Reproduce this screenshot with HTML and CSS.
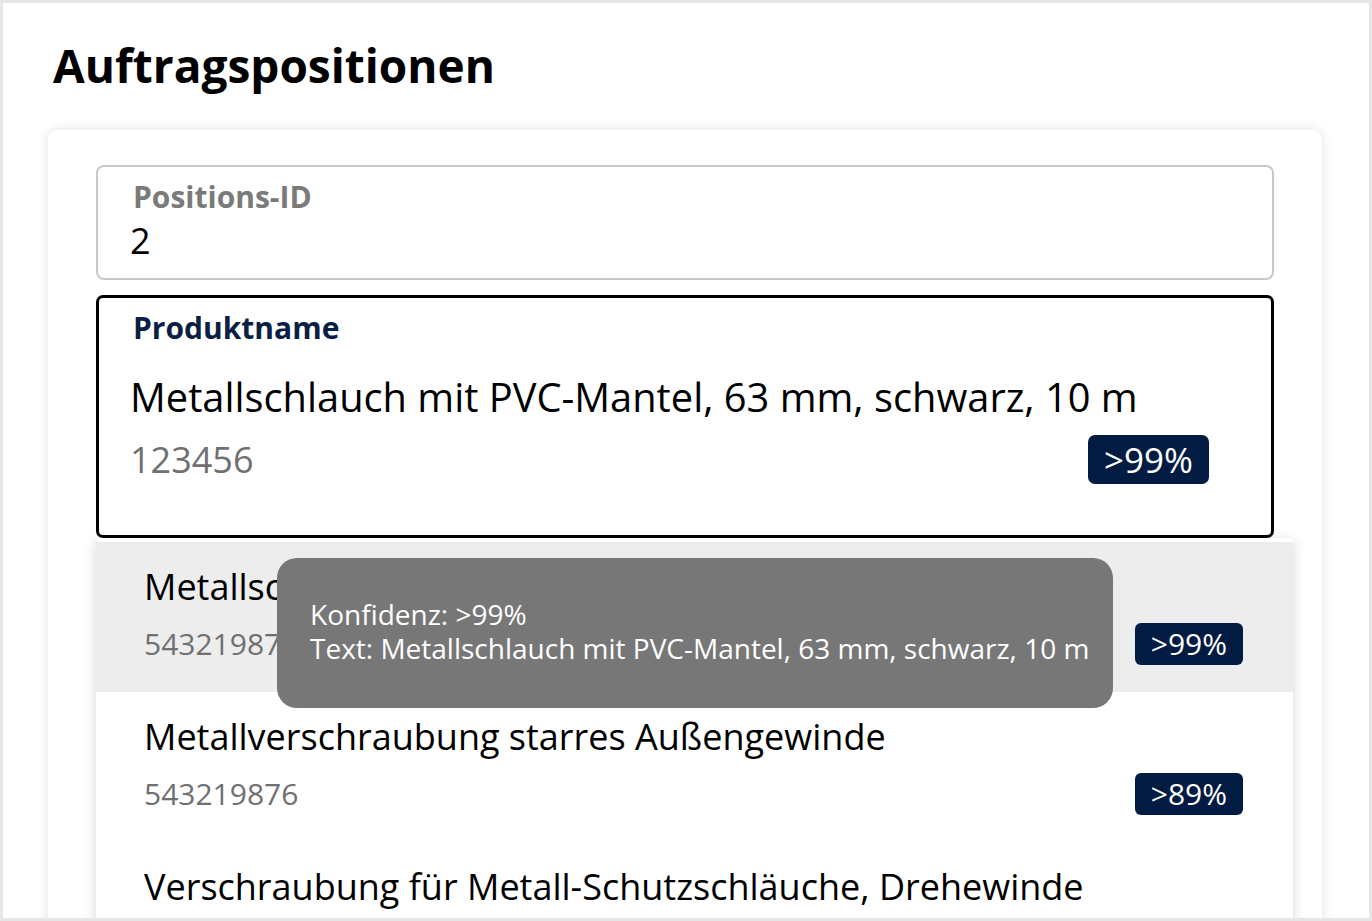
FILE: index.html
```html
<!DOCTYPE html>
<html lang="de">
<head>
<meta charset="utf-8">
<title>Auftragspositionen</title>
<link rel="stylesheet" href="styles.css">
</head>
<body>

<div class="frame">

    <h1 class="page-title">Auftragspositionen</h1>

    <div class="card">

        <!-- Positions-ID -->
        <div class="field">
            <div class="field-label">Positions-ID</div>
            <div class="field-value">2</div>
        </div>

        <!-- Produktname (focused) -->
        <div class="field field-active">
            <div class="field-label">Produktname</div>
            <div class="product-name">Metallschlauch mit PVC-Mantel, 63 mm, schwarz, 10 m</div>
            <div class="product-row">
                <span class="product-code">123456</span>
                <span class="badge">&gt;99%</span>
            </div>
        </div>

        <!-- dropdown -->
        <div class="dropdown">
            <div class="option option-hover">
                <div class="option-name">Metallschlauch mit PVC-Mantel, 63 mm, schwarz, 10 m</div>
                <div class="option-row">
                    <span class="option-code">543219876</span>
                    <span class="badge badge-small">&gt;99%</span>
                </div>
            </div>
            <div class="option">
                <div class="option-name">Metallverschraubung starres Außengewinde</div>
                <div class="option-row">
                    <span class="option-code">543219876</span>
                    <span class="badge badge-small">&gt;89%</span>
                </div>
            </div>
            <div class="option">
                <div class="option-name">Verschraubung für Metall-Schutzschläuche, Drehewinde</div>
                <div class="option-row">
                    <span class="option-code">543219877</span>
                    <span class="badge badge-small">&gt;79%</span>
                </div>
            </div>

            <!-- tooltip over first option -->
            <div class="tooltip">
                <div>Konfidenz: &gt;99%</div>
                <div>Text: Metallschlauch mit PVC-Mantel, 63 mm, schwarz, 10 m</div>
            </div>
        </div>

    </div>

</div>

</body>
</html>
```

FILE: styles.css
```css
html, body {
    margin: 0;
    height: 100%;
    overflow: hidden;
}

body {
    background-color: #ffffff;
    font-family: "Open Sans", "Noto Sans", sans-serif;
    color: #000000;
}

.frame {
    box-sizing: border-box;
    height: 100vh;
    border: 3px solid #e6e6e6;
    padding: 0 47px 0 45px;
    overflow: hidden;
}

.page-title {
    font-size: 46px;
    font-weight: 700;
    line-height: 1.2;
    margin: 35px 0 37px 0;
    padding-left: 5px;
}

.card {
    background-color: #ffffff;
    border-radius: 10px;
    box-shadow: 0 0 12px rgba(0, 0, 0, 0.12);
    padding: 35px 48px;
    height: 900px;
}

/* fields */

.field {
    border: 2px solid #c8c8c8;
    border-radius: 8px;
    padding: 12px 34px 15px 35px;
}

.field + .field {
    margin-top: 15px;
}

.field-label {
    font-size: 30px;
    font-weight: 700;
    line-height: 36px;
    color: #7a7a7a;
}

.field-value {
    font-size: 36px;
    line-height: 44px;
    margin-top: 4px;
    margin-left: -3px;
}

.field-active {
    border: 3px solid #000000;
    border-radius: 7px;
    padding: 12px 34px 51px 34px;
}

.field-active .field-label {
    color: #0b1f45;
}

.product-name {
    font-size: 39.8px;
    line-height: 46px;
    margin-top: 28px;
    margin-left: -3px;
    white-space: nowrap;
}

.product-row {
    display: flex;
    align-items: center;
    justify-content: space-between;
    margin-top: 15px;
    margin-left: -3px;
    padding-right: 28px;
}

.product-code {
    font-size: 36px;
    line-height: 49px;
    color: #707070;
}

.badge {
    background-color: #011b42;
    color: #ffffff;
    border-radius: 7px;
    font-size: 35px;
    line-height: 49px;
    padding: 0 16px;
}

.badge-small {
    font-size: 30px;
    line-height: 42px;
    border-radius: 6px;
}

/* dropdown list */

.dropdown {
    position: relative;
    margin-right: -19px;
    padding-top: 4px;
    background-color: #ffffff;
    box-shadow: 0 3px 12px rgba(0, 0, 0, 0.16);
}

.option {
    box-sizing: border-box;
    height: 150px;
    padding: 24px 50px 0 48px;
}

.option-hover {
    background-color: #ededed;
}

.option-name {
    font-size: 36px;
    line-height: 42px;
    white-space: nowrap;
}

.option-row {
    display: flex;
    align-items: center;
    justify-content: space-between;
    margin-top: 15px;
}

.option-code {
    font-size: 30px;
    line-height: 42px;
    color: #707070;
}

/* tooltip */

.tooltip {
    position: absolute;
    left: 181px;
    top: 20px;
    box-sizing: border-box;
    width: 836px;
    height: 150px;
    padding: 39px 29px 0 33px;
    background-color: #777777;
    border-radius: 20px;
    color: #ffffff;
    font-size: 28px;
    line-height: 34px;
    white-space: nowrap;
}
```
